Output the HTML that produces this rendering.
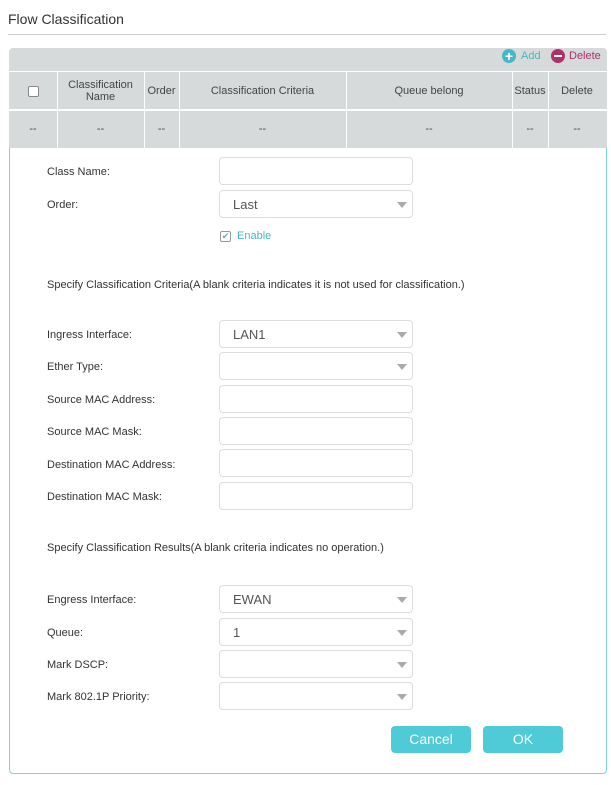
<!DOCTYPE html>
<html><head><style>
*{box-sizing:border-box;margin:0;padding:0}
body{width:611px;height:785px;background:#fff;font-family:"Liberation Sans",sans-serif;color:#333;position:relative;overflow:hidden}
.a{position:absolute}
.inp{position:absolute;left:219px;width:194px;height:28px;border:1px solid #ddd;border-radius:4px;background:#fff;font-size:13px;color:#555;padding:6px 0 0 13px}
.sel::after{content:"";position:absolute;right:5px;top:11px;border-left:5px solid transparent;border-right:5px solid transparent;border-top:6px solid #aaa}
.lab{position:absolute;left:47px;font-size:11px;color:#333}
.col{position:absolute;top:72px;height:76px;width:1px;background:#fff}
.h{position:absolute;top:72px;height:38px;font-size:11px;color:#444;display:flex;align-items:center;justify-content:center;text-align:center;line-height:12px}
.d{position:absolute;top:110px;height:38px;font-size:11px;color:#444;display:flex;align-items:center;justify-content:center}
.btn{position:absolute;top:726px;height:27px;width:80px;background:#4ecbd6;border-radius:4px;color:#fff;font-size:14px;text-align:center;line-height:26px}
</style></head><body>
<div class="a" style="left:8px;top:11px;font-size:14px;color:#333">Flow Classification</div>
<div class="a" style="left:8px;top:34px;width:598px;height:1px;background:#ccc"></div>
<div class="a" style="left:9px;top:48px;width:598px;height:100px;background:#d7dadb;border-radius:4px 4px 0 0"></div>
<div class="a" style="left:502px;top:49px;width:14px;height:14px;border-radius:50%;background:#44b9c6;color:#fff;font-size:14px;line-height:14px;text-align:center;font-weight:bold">+</div>
<div class="a" style="left:521px;top:50px;font-size:11px;color:#44b9c6">Add</div>
<div class="a" style="left:551px;top:49px;width:14px;height:14px;border-radius:50%;background:#b0306a"><div style="position:absolute;left:3px;top:6px;width:8px;height:2px;background:#fff"></div></div>
<div class="a" style="left:569px;top:50px;font-size:11px;color:#b0306a">Delete</div>
<div class="a" style="left:9px;top:71px;width:598px;height:1px;background:#fff"></div>
<div class="a" style="left:9px;top:109px;width:598px;height:2px;background:#fff"></div>
<div class="col" style="left:57px"></div><div class="col" style="left:144px"></div><div class="col" style="left:179px"></div><div class="col" style="left:346px"></div><div class="col" style="left:512px"></div><div class="col" style="left:548px"></div>
<div class="h" style="left:9px;width:48px"><div style="width:11px;height:11px;border:1px solid #888;border-radius:2px;background:#fff"></div></div>
<div class="h" style="left:57px;width:87px">Classification<br>Name</div>
<div class="h" style="left:144px;width:35px">Order</div>
<div class="h" style="left:179px;width:167px">Classification Criteria</div>
<div class="h" style="left:346px;width:166px">Queue belong</div>
<div class="h" style="left:512px;width:36px">Status</div>
<div class="h" style="left:548px;width:58px">Delete</div>
<div class="d" style="left:9px;width:48px">--</div><div class="d" style="left:57px;width:87px">--</div><div class="d" style="left:144px;width:35px">--</div><div class="d" style="left:179px;width:167px">--</div><div class="d" style="left:346px;width:166px">--</div><div class="d" style="left:512px;width:36px">--</div><div class="d" style="left:548px;width:58px">--</div>
<div class="a" style="left:9px;top:148px;width:598px;height:626px;border:1px solid #7fd3dc;border-top:none;border-radius:0 0 4px 4px"></div>
<div class="lab" style="top:166px">Class Name:</div><div class="inp" style="top:157px"></div>
<div class="lab" style="top:199px">Order:</div><div class="inp sel" style="top:190px">Last</div>
<div class="a" style="left:220px;top:231px;width:11px;height:11px;border:1px solid #999;border-radius:2px;color:#44b9c6;font-size:9px;line-height:9px;text-align:center">✔</div>
<div class="a" style="left:237px;top:230px;font-size:11px;color:#44b9c6">Enable</div>
<div class="lab" style="top:279px">Specify Classification Criteria(A blank criteria indicates it is not used for classification.)</div>
<div class="lab" style="top:329px">Ingress Interface:</div><div class="inp sel" style="top:320px">LAN1</div>
<div class="lab" style="top:361px">Ether Type:</div><div class="inp sel" style="top:352px"></div>
<div class="lab" style="top:394px">Source MAC Address:</div><div class="inp" style="top:385px"></div>
<div class="lab" style="top:426px">Source MAC Mask:</div><div class="inp" style="top:417px"></div>
<div class="lab" style="top:459px">Destination MAC Address:</div><div class="inp" style="top:449px"></div>
<div class="lab" style="top:491px">Destination MAC Mask:</div><div class="inp" style="top:482px"></div>
<div class="lab" style="top:542px">Specify Classification Results(A blank criteria indicates no operation.)</div>
<div class="lab" style="top:594px">Engress Interface:</div><div class="inp sel" style="top:585px">EWAN</div>
<div class="lab" style="top:627px">Queue:</div><div class="inp sel" style="top:618px">1</div>
<div class="lab" style="top:659px">Mark DSCP:</div><div class="inp sel" style="top:650px"></div>
<div class="lab" style="top:691px">Mark 802.1P Priority:</div><div class="inp sel" style="top:682px"></div>
<div class="btn" style="left:391px">Cancel</div>
<div class="btn" style="left:483px">OK</div>
</body></html>
